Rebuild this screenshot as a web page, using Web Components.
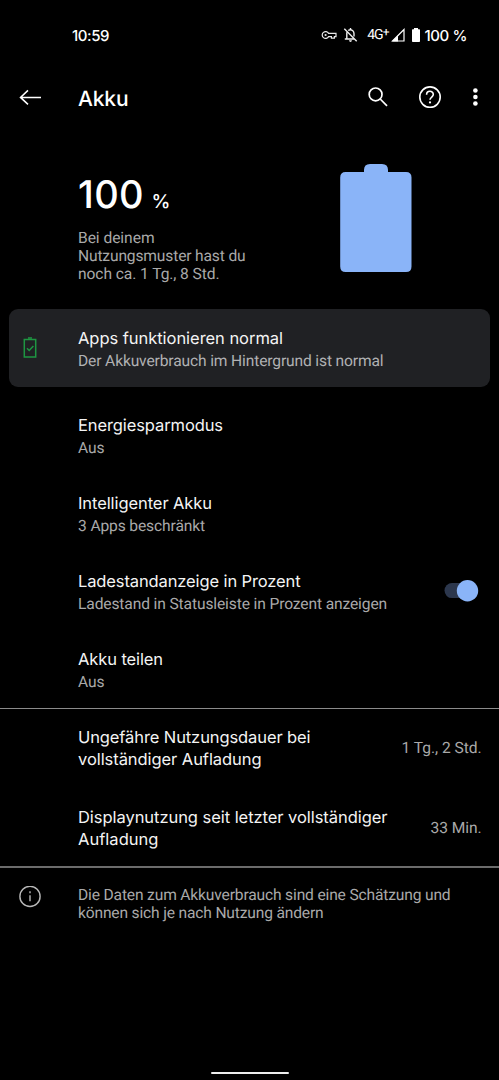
<!DOCTYPE html>
<html lang="de">
<head>
<meta charset="utf-8">
<title>Akku</title>
<style>
html,body{margin:0;background:#000;color:#f1f3f4;font-family:Roboto,sans-serif;text-rendering:geometricPrecision}
body{height:1080px;overflow:hidden}
</style>
</head>
<body>
<battery-screen></battery-screen>
<script>
const define = (name, html, setup) => {
  const tpl = document.createElement('template');
  tpl.innerHTML = html;
  customElements.define(name, class extends HTMLElement {
    constructor() {
      super();
      this.attachShadow({mode: 'open'}).append(tpl.content.cloneNode(true));
    }
    connectedCallback() { if (setup) setup(this, this.shadowRoot); }
  });
};

/* One line of text, tracked so that it takes the width given in "w". */
define('text-line', `<style>
:host{display:block;white-space:nowrap;line-height:inherit}
span{display:inline-block}
</style><span><slot></slot></span>`, (el, root) => {
  const span = root.querySelector('span');
  const want = parseFloat(el.getAttribute('w'));
  const count = el.textContent.length;
  if (!want || !count) return;
  requestAnimationFrame(() => {
    span.style.letterSpacing = '0px';
    const d = (want - span.getBoundingClientRect().width) / count;
    span.style.letterSpacing = d.toFixed(3) + 'px';
  });
});

define('status-bar', `<style>
:host{display:flex;height:70px;box-sizing:border-box;padding:0 32px 0 72px;align-items:center;font:500 15px/20px Inter,sans-serif;color:#fff}
.space{flex:1}
svg{display:block;flex:none}
.time,.pct{padding-top:2px}
.net{font:400 14px/20px Roboto,sans-serif;margin:0 1px 0 9px;display:flex}
.net sup{font-size:12px;line-height:14px}
.pct{margin-left:4px}
</style>
<div class="time"><text-line w="37">10:59</text-line></div><div class="space"></div>
<svg width="16" height="12" viewBox="0 0 16 12" fill="none" stroke="#e8e8e8" stroke-width="1.2"><path d="M7.6 4.4A3.4 3.4 0 1 0 7.6 7.6H10.4V9.2H13.4V7.6H15V4.4Z"/><circle cx="4.6" cy="6" r="1.1" fill="#e8e8e8" stroke="none"/></svg>
<svg style="margin-left:6px" width="15" height="16" viewBox="0 0 15 16" fill="none" stroke="#eee" stroke-width="1.4"><path d="M1.3 1.7L13.7 14.2M3.8 5.2V11.8M1.8 12H11M5.2 3.5Q7.5 2 9.8 3.7Q11 4.8 11 6.7V9.4M7.5 1V3"/><path d="M6 13.3H9Q8.8 14.9 7.5 14.9T6 13.3Z" fill="#eee" stroke="none"/></svg>
<div class="net"><text-line w="15.500">4G</text-line><sup>+</sup></div>
<svg width="14" height="14" viewBox="0 0 14 14"><path d="M1.5 13L13 1.5V13Z" fill="none" stroke="#fff" stroke-width="1.2"/><path d="M1 13.5L7 7.5V13.5Z" fill="#fff"/></svg>
<svg style="margin-left:6px" width="10" height="14" viewBox="0 0 10 14" fill="#fff"><path d="M3 0H7V1.3H8.3Q9 1.3 9 2V13.2Q9 14 8.2 14H1.8Q1 14 1 13.2V2Q1 1.3 1.7 1.3H3Z"/></svg>
<div class="pct"><text-line w="42.500">100 %</text-line></div>`);

define('app-bar', `<style>
:host{display:flex;height:56px;align-items:center;padding:0 17px 0 18px;color:#fff}
h1{margin:0 auto 0 35px;padding-top:3px;font:500 21px/28px Inter,sans-serif}
svg{display:block;fill:none;stroke:#fff}
</style>
<svg width="25" height="20" viewBox="0 0 25 20" stroke-width="1.5"><path d="M23 9.400H3M10 2.400L2.500 9.400L10 16.400"/></svg>
<h1><text-line w="50.5">Akku</text-line></h1>
<svg width="22" height="22" viewBox="0 0 22 22" stroke-width="1.7"><circle cx="8.6" cy="7.400" r="6.4"/><path d="M13.2 12L20 18.800"/></svg>
<svg style="margin-left:28px" width="26" height="26" viewBox="0 0 26 26" stroke-width="1.600"><circle cx="13" cy="12.1" r="10.200"/><path d="M9.6 9.7C9.6 5.2 16.3 5.2 16.3 9.6C16.3 12 13 12.1 13 14.8"/><circle cx="13" cy="17.4" r="1.1" fill="#fff" stroke="none"/></svg>
<svg style="margin-left:26px" width="13" height="22" viewBox="0 0 13 22"><g fill="#fff" stroke="none"><circle cx="6.4" cy="3.5" r="2.3"/><circle cx="6.4" cy="10" r="2.3"/><circle cx="6.4" cy="16.5" r="2.3"/></g></svg>`);

define('battery-summary', `<style>
:host{display:flex;justify-content:space-between;height:183px;box-sizing:border-box;padding:38px 87px 0 78px}
.level{display:flex;align-items:baseline;height:65px;font:500 38px/62px Inter,sans-serif;color:#fff}
.unit{font-size:19px;margin-left:7.500px;font-weight:500}
.info{color:#a9a9a9;font:400 15.6px/18px Roboto,sans-serif}
svg{display:block}
</style>
<div><div class="level"><text-line w="66">100</text-line><div class="unit"><text-line w="18">%</text-line></div></div>
<div class="info"><slot></slot></div></div>
<svg width="72" height="109" viewBox="0 0 72 109" fill="#8ab4f8"><path d="M24 8V6Q24 0 30 0H42Q48 0 48 6V8H66Q71.5 8 71.5 13.5V102.5Q71.5 108 66 108H5.700Q.2 108 .2 102.500V13.500Q.2 8 5.700 8Z"/></svg>`);

define('pref-row', `<style>
:host{display:flex;height:78px;box-sizing:border-box;padding:18px 17.500px 0 0}
:host([card]){background:#202124;border-radius:9px;margin:0 9px 9px;height:78px;padding-right:8px;padding-top:18px}
:host([tall]){height:79px;padding-top:19px}
:host([lined]){height:79px;padding-top:17px;border-top:1px solid #8b8b8b}
.icon{width:78px;flex:none;box-sizing:border-box;padding-left:18px}
:host([card]) .icon{width:69px;padding-left:9px;padding-top:8px}
.text{flex:1}
.title{font:400 16.500px/22px Inter,sans-serif;color:#f4f4f4}
.sub{font:400 15.600px/20px Roboto,sans-serif;color:#a9a9a9;margin-top:2px}
:host([card]) .sub{color:#b0b1b3}
.end{font:400 15.600px/20px Roboto,sans-serif;color:#a9a9a9;padding-top:12px}
</style>
<div class="icon"><slot name="icon"></slot></div>
<div class="text"><div class="title"><slot name="title"></slot></div><div class="sub"><slot></slot></div></div>
<div class="end"><slot name="end"></slot></div>`);

define('toggle-switch', `<style>
:host{display:block;width:35px;height:22px;margin-top:-2px;margin-right:3px}
svg{display:block}
</style><svg width="35" height="22" viewBox="0 0 35 22"><rect x=".5" y="3.100" width="30" height="15" rx="7.500" fill="#2c374d"/><circle cx="23.500" cy="10.700" r="10.700" fill="#8ab4f8"/></svg>`);

define('footer-note', `<style>
:host{display:flex;border-top:2px solid #6b6b6b;padding-top:18px;font:400 15.600px/18px Roboto,sans-serif;color:#a9a9a9}
svg{display:block;margin-left:18px;width:24px;height:24px;margin-right:36px}
</style><svg viewBox="0 0 24 24" fill="none" stroke="#b8b8b8" stroke-width="1.400"><circle cx="12" cy="10.400" r="10.100"/><path d="M12 9.200V15.200M12 5.200V7.200"/></svg><div><slot></slot></div>`);

define('nav-handle', `<style>
:host{display:flex;justify-content:center;margin-top:auto;padding-bottom:6px}
div{width:78px;height:2px;border-radius:1px;background:#eee}
</style><div></div>`);

define('battery-screen', `<style>
:host{display:flex;flex-direction:column;height:1080px;background:#000}
svg{display:block}
</style>
<status-bar></status-bar>
<app-bar></app-bar>
<battery-summary>
<text-line w="76.500">Bei deinem</text-line><text-line w="167.500">Nutzungsmuster hast du</text-line><text-line w="141.500">noch ca. 1 Tg., 8 Std.</text-line>
</battery-summary>
<pref-row card>
<svg slot="icon" width="24" height="26" viewBox="0 0 24 26" fill="none" stroke="#1e9642" stroke-width="1.500"><path d="M6.300 4.400H17.700V22H6.300Z"/><path d="M10 3H14M9 13.300L11.200 15.500L15.400 10.900"/></svg>
<text-line slot="title" w="205">Apps funktionieren normal</text-line><text-line w="305.500">Der Akkuverbrauch im Hintergrund ist normal</text-line>
</pref-row>
<pref-row><text-line slot="title" w="145">Energiesparmodus</text-line><text-line w="26.500">Aus</text-line></pref-row>
<pref-row><text-line slot="title" w="134">Intelligenter Akku</text-line><text-line w="127">3 Apps beschränkt</text-line></pref-row>
<pref-row><text-line slot="title" w="222.500">Ladestandanzeige in Prozent</text-line><text-line w="309">Ladestand in Statusleiste in Prozent anzeigen</text-line><toggle-switch slot="end"></toggle-switch></pref-row>
<pref-row><text-line slot="title" w="85">Akku teilen</text-line><text-line w="26.500">Aus</text-line></pref-row>
<pref-row tall lined><div slot="title"><text-line w="232.500">Ungefähre Nutzungsdauer bei</text-line><text-line w="183.500">vollständiger Aufladung</text-line></div><text-line slot="end" w="80">1 Tg., 2 Std.</text-line></pref-row>
<pref-row tall><div slot="title"><text-line w="309.500">Displaynutzung seit letzter vollständiger</text-line><text-line w="80.500">Aufladung</text-line></div><text-line slot="end" w="51">33 Min.</text-line></pref-row>
<footer-note><text-line w="372.500">Die Daten zum Akkuverbrauch sind eine Schätzung und</text-line><text-line w="245.500">können sich je nach Nutzung ändern</text-line></footer-note>
<nav-handle></nav-handle>`);
</script>
</body>
</html>
